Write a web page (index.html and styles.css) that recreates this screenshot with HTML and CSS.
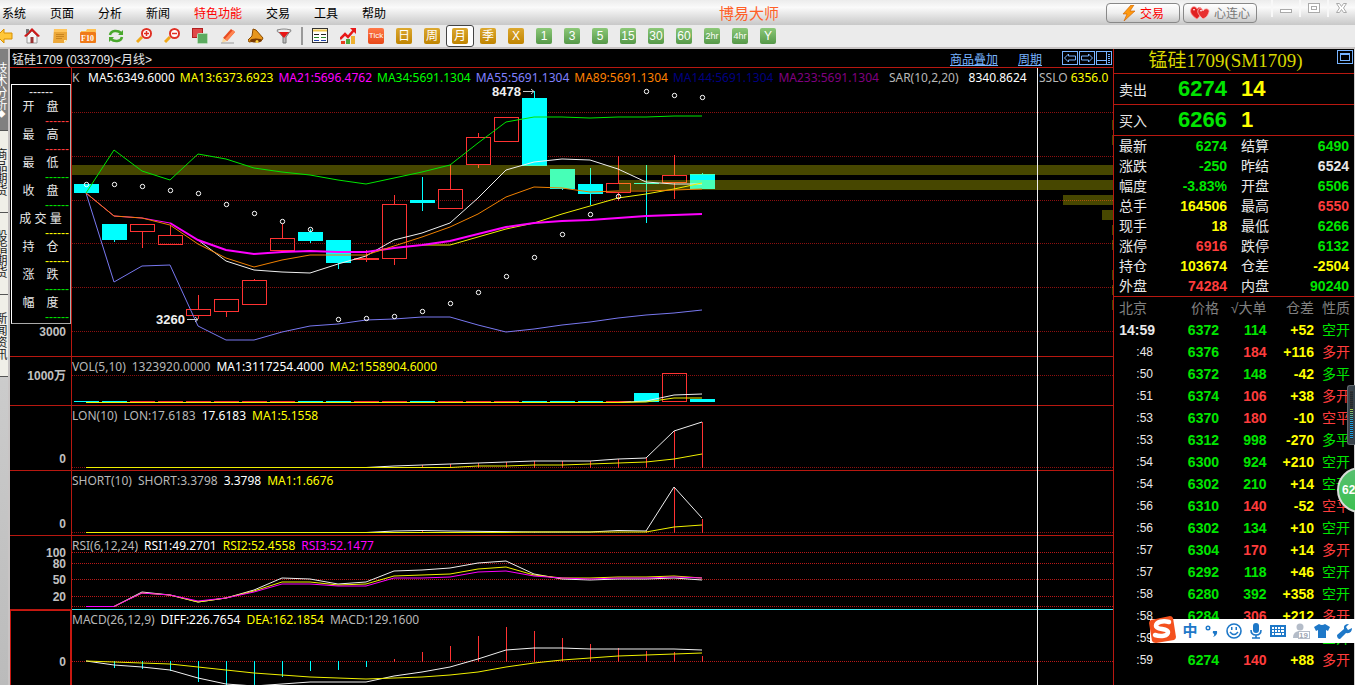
FILE: index.html
```html
<!DOCTYPE html>
<html lang="zh-CN">
  <head>
    <title>博易大师</title>
    <meta charset="utf-8" />
    <meta name="viewport" content="width=device-width" />
    <link rel="stylesheet" href="styles.css">
  </head>
  <body>

    <header class="menubar">
        <nav class="menu">
            <a href="#">系统</a>
            <a href="#">页面</a>
            <a href="#">分析</a>
            <a href="#">新闻</a>
            <a href="#" class="hot">特色功能</a>
            <a href="#">交易</a>
            <a href="#">工具</a>
            <a href="#">帮助</a>
        </nav>
        <h1 class="app-title">博易大师</h1>
        <button class="pill trade">
            <svg width="14" height="16" viewBox="0 0 14 16"><path d="M9 0L1 9h4L2 16 13 6H8l4-6z" fill="#ff9a10" stroke="#c85a00" stroke-width=".6"/></svg>
            交易
        </button>
        <button class="pill heart">
            <svg width="20" height="14" viewBox="0 0 20 14"><path d="M7 13C1 9 0 6 1 3s5-3 6 0c2-3 6-1 5 2s-2 5-5 8z" fill="#e02020" stroke="#f88" stroke-width=".8"/><path d="M13 13c-4-4-6-6-5-9s4-2 5 1c2-4 7-2 6 1s-2 5-6 7z" fill="#e83030" stroke="#fbb" stroke-width=".8"/><path d="M3 4q1-1 2 0M10 5q1-1 2 0" stroke="#fff" fill="none"/></svg>
            心连心
        </button>
        <div class="window-buttons">
            <button aria-label="最小化"><svg width="14" height="14"><rect x="1.500" y="7.500" width="11" height="3" fill="#fff" stroke="#aaa"/></svg></button>
            <button aria-label="还原"><svg width="14" height="14"><rect x="1.500" y="1.500" width="11" height="9" fill="#fff" stroke="#aaa"/><rect x="4.500" y="4.500" width="5" height="3" fill="#fff" stroke="#aaa"/></svg></button>
            <button aria-label="关闭"><svg width="14" height="14"><path d="M1.500 1.500h3l2 3 2-3h3l-3 4.500 3 4.500h-3l-2-3-2 3h-3l3-4.500z" fill="#fff" stroke="#aaa"/></svg></button>
        </div>
    </header>

    <div class="toolbar">
        <button class="back" aria-label="后退"><svg width="13" height="16" viewBox="0 0 13 16"><path d="M-3 8l7-7v4h8v6H4v4z" fill="#ffc73a" stroke="#d89000"/></svg></button>
        <button aria-label="主页"><svg width="16" height="16"><path d="M3 8v7h10V8L8 3z" fill="#f4f4f4" stroke="#999"/><path d="M0 8L8 0l8 8-2 1-6-6-6 6z" fill="#d01818"/><path d="M2 1h3v3L2 6z" fill="#777"/><path d="M6.500 9h3v6h-3z" fill="#933"/></svg></button>
        <button aria-label="记事"><svg width="16" height="16"><path d="M2 1h13v11l-3 3H1z" fill="#eca83a"/><path d="M2 1h13v3H2z" fill="#ffc55c"/><path d="M4 6.500h8M4 8.500h8M4 10.500h6" stroke="#c88420"/><path d="M15 12l-3 3v-3z" fill="#fff0c0"/></svg></button>
        <button aria-label="F10"><svg width="17" height="16"><path d="M1 3h5l1-2h9v3H1z" fill="#ffc050"/><rect y="4" width="16" height="11" rx="1" fill="#f07a18"/><text x="1" y="13" class="f10">F10</text></svg></button>
        <button aria-label="刷新"><svg width="16" height="16"><path d="M2 7c1-5 8-5 11-2M14 9c-1 5-8 5-11 2" fill="none" stroke="#49a82c" stroke-width="2.500"/><path d="M15 2v5h-5zM1 14V9h5z" fill="#49a82c"/></svg></button>
        <button aria-label="放大"><svg width="16" height="16"><path d="M6 9l-5 5" stroke="#f0a818" stroke-width="3"/><circle cx="10.500" cy="5.500" r="4.500" fill="#fff" stroke="#e03024" stroke-width="2"/><path d="M8 5.500h5M10.500 3v5" stroke="#e03024" stroke-width="1.500"/></svg></button>
        <button aria-label="缩小"><svg width="16" height="16"><path d="M6 9l-5 5" stroke="#f0a818" stroke-width="3"/><circle cx="10.500" cy="5.500" r="4.500" fill="#fff" stroke="#e03024" stroke-width="2"/><path d="M8 5.500h5" stroke="#e03024" stroke-width="1.500"/></svg></button>
        <button aria-label="叠加"><svg width="16" height="16"><rect x=".5" y=".5" width="10" height="9" fill="#e04a4a" stroke="#b02020"/><rect x="5.500" y="5.500" width="10" height="10" rx="1" fill="#5cab60" stroke="#b8dcb8"/></svg></button>
        <button aria-label="画线"><svg width="16" height="16"><path d="M3 10L11 1l4 3-8 9z" fill="#e84a20"/><path d="M5 11l8-9 2 2-8 9z" fill="#ff8450"/><path d="M3 10l4 3-5 2z" fill="#f8d8a0"/><path d="M1 15h13" stroke="#999"/></svg></button>
        <button aria-label="预警"><svg width="16" height="16"><path d="M5 1l3 1 7 8-1 2L1 14l-1-2 4-4z" fill="#e8961c" stroke="#8a4a00"/><ellipse cx="8" cy="12.500" rx="6" ry="2" fill="#7a3a00"/><circle cx="9" cy="13.500" r="1.500" fill="#ffd040"/></svg></button>
        <button aria-label="筛选"><svg width="16" height="16"><path d="M1 2h14L10 9v6H7V9z" fill="#bbb" stroke="#777"/><ellipse cx="8" cy="3" rx="7" ry="2" fill="#eee" stroke="#888"/><path d="M3 4h10l-5 6z" fill="#e81818"/></svg></button>
        <span class="separator"></span>
        <button aria-label="报价"><svg width="16" height="16"><rect x=".5" y=".5" width="15" height="14" fill="#fff" stroke="#333"/><path d="M1 2.500h14" stroke="#f0c850" stroke-width="2"/><path d="M2 6.500h5M9 6.500h5" stroke="#222"/><path d="M2 9.500h5M9 9.500h5" stroke="#2a8a2a"/><path d="M2 12.500h5M9 12.500h5" stroke="#24a"/></svg></button>
        <button aria-label="走势"><svg width="16" height="16"><path d="M0 11l5-5 3 3 6-7" fill="none" stroke="#e81818" stroke-width="2.500"/><path d="M10 0h6v6z" fill="#e81818"/><path d="M1 13h4v3H1z" fill="#e84020"/><path d="M6 11h4v5H6z" fill="#4caa3c"/><path d="M11 8h4v8h-4z" fill="#eeb030"/></svg></button>
        <button><span class="period tick">Tick</span></button>
        <button><span class="period gold">日</span></button>
        <button><span class="period gold">周</span></button>
        <button class="active"><span class="period gold">月</span></button>
        <button><span class="period gold">季</span></button>
        <button><span class="period gold">X</span></button>
        <button><span class="period">1</span></button>
        <button><span class="period">3</span></button>
        <button><span class="period">5</span></button>
        <button><span class="period">15</span></button>
        <button><span class="period">30</span></button>
        <button><span class="period">60</span></button>
        <button><span class="period narrow">2hr</span></button>
        <button><span class="period narrow">4hr</span></button>
        <button><span class="period">Y</span></button>
    </div>

    <main class="workspace">

        <nav class="side-tabs">
            <a href="#" class="current">技术分析<span>◆</span></a>
            <a href="#">商品期货</a>
            <a href="#">股指期货</a>
            <a href="#">新闻资讯</a>
        </nav>

        <section class="charts">
            <div class="chart-title">
                <h2>锰硅1709 (033709)&lt;月线&gt;</h2>
                <a href="#">商品叠加</a>
                <a href="#">周期</a>
                <div class="chart-buttons">
                    <button aria-label="向左"><svg width="16" height="14"><rect x=".5" y=".5" width="15" height="13"/><path d="M2.500 7l4-4v2h7v4h-7v2z"/></svg></button>
                    <button aria-label="向右"><svg width="16" height="14"><rect x=".5" y=".5" width="15" height="13"/><path d="M13.500 7l-4-4v2h-7v4h7v2z"/></svg></button>
                    <button aria-label="布局"><svg width="16" height="14"><rect x=".5" y=".5" width="15" height="13"/><path d="M10.500 1v12M1 9.500h9M12 3.500h2M12 5.500h2M12 7.500h2M12 9.500h2M12 11.500h2"/></svg></button>
                </div>
            </div>

            <div class="panes">
                <div class="pane">
                    <div class="axis">
                        <div class="info">
                            <p class="when">------</p>
                            <dl>
                                <dt>开&emsp;盘</dt><dd class="up">------</dd>
                                <dt>最&emsp;高</dt><dd class="up">------</dd>
                                <dt>最&emsp;低</dt><dd class="down">------</dd>
                                <dt>收&emsp;盘</dt><dd class="down">------</dd>
                                <dt>成 交 量</dt><dd class="flat">------</dd>
                                <dt>持&emsp;仓</dt><dd class="flat">------</dd>
                                <dt>涨&emsp;跌</dt><dd class="down">------</dd>
                                <dt>幅&emsp;度</dt><dd class="down">------</dd>
                            </dl>
                        </div>
                        <span class="axis-label">3000</span>
                    </div>
                    <div class="plot">
                        <svg width="100%" height="288">
                            <defs>
                                <marker id="dot" markerWidth="7" markerHeight="7" refX="3" refY="3" markerUnits="userSpaceOnUse"><circle cx="3.500" cy="3.500" r="2.200" class="sar"/></marker>
                            </defs>
                            <g class="grid">
                                <line x2="100%" y1="44.500" y2="44.500"/><line x2="100%" y1="88.500" y2="88.500"/>
                                <line x2="100%" y1="132.500" y2="132.500"/><line x2="100%" y1="175.500" y2="175.500"/>
                                <line x2="100%" y1="219.500" y2="219.500"/><line x2="100%" y1="263.500" y2="263.500"/>
                            </g>
                            <!-- candles -->
                            <path class="rise" d="M58.500 156.500h24v7h-24zM70.500 163v17M86.500 167.500h24v9h-24zM98.500 157v10M114.500 241.500h24v6h-24zM126.500 227v14M126.500 248v3M142.500 231.500h24v12h-24zM154.500 244v5M170.500 212.500h24v24h-24zM182.500 211v1M198.500 170.500h24v12h-24zM210.500 156v14M282.500 190.500h24v1h-24zM294.500 182v12M310.500 136.500h24v54h-24zM322.500 127v9M322.500 191v6M366.500 121.500h24v19h-24zM378.500 97v24M394.500 69.500h24v27h-24zM406.500 65v4M406.500 97v3M422.500 49.500h24v24h-24zM534.500 115.500h24v9h-24zM546.500 88v27M546.500 125v8M590.500 107.500h24v7h-24zM602.500 87v20M602.500 115v16"/>
                            <path class="fall" d="M2 116h25v9H2zM30 156h25v16H30zM42 172h1v2h-1zM226 164h25v9h-25zM238 161h1v14h-1zM254 172h25v23h-25zM266 195h1v6h-1zM338 132h25v3h-25zM350 109h1v34h-1zM450 30h25v68h-25zM462 23h1v7h-1zM478 101h25v20h-25zM490 121h1v1h-1zM506 116h25v10h-25zM518 100h1v37h-1zM574 97h1v58h-1zM562 115h25v1h-25zM618 106h25v15h-25zM630 105h1v1h-1z"/>
                            <!-- price volume bands -->
                            <g class="band">
                                <rect y="97" width="100%" height="10"/>
                                <rect x="547" y="112" width="100%" height="10"/>
                                <rect x="478" y="101" width="25" height="19"/>
                            </g>
                            <svg x="100%" overflow="visible" class="band">
                                <path d="M-50 127h50v10h-50zM-11 142h11v10h-11zM-1 52h1v10h-1zM-1 67h1v10h-1zM-1 157h1v10h-1zM-1 172h1v10h-1zM-1 202h1v10h-1zM-1 217h1v10h-1zM-1 232h1v10h-1z"/>
                            </svg>
                            <polyline class="blue" points="14,125 42,214 70,198 98,197 126,258 154,272 182,272 210,264 238,258 266,256 294,252 322,251 350,249 378,249 406,257 434,264 462,261 490,257 518,254 546,250 574,247 602,245 630,242"/>
                            <polyline class="green" points="14,125 42,82 70,103 98,112 126,86 154,91 182,100 210,104 238,107 266,112 294,116 322,110 350,104 378,97 406,75 434,54 462,49 490,49 518,50 546,49 574,49 602,48 630,48"/>
                            <polyline class="white" points="126,172 154,193 182,202 210,204 238,205 266,196 294,188 322,172 350,165 378,155 406,130 434,102 462,94 490,91 518,92 546,101 574,114 602,116 630,116"/>
                            <polyline class="yellow" points="350,177 378,177 406,169 434,161 462,155 490,146 518,138 546,130 574,126 602,121 630,115"/>
                            <polyline class="magenta" points="14,125 42,148 70,150 98,155"/>
                            <polyline class="magenta thick" points="98,155 126,172 154,182 182,186 210,184 238,183 266,184 294,184 322,180 350,177 378,173 406,166 434,159 462,155 490,153 518,152 546,150 574,148 602,147 630,146"/>
                            <polyline class="orange" points="14,125 42,148 70,150 98,157 126,176 154,190 182,199 210,192 238,187 266,187 294,187 322,178 350,169 378,159 406,146 434,129 462,119 490,120 518,124 546,123 574,123 602,122 630,121"/>
                            <polyline class="dots" points="14,116 42,116 70,118 98,122 126,125 154,136 182,145 210,153 238,161 266,251 294,250 322,248 350,243 378,235 406,224 434,208 462,189 490,166 518,146 546,128 574,23 602,27 630,29"/>
                            <path class="arrow" d="M451 23.500h11M459 21l3 2.500-3 2.500M115 251.500h11M123 249l3 2.500-3 2.500"/>
                            <text class="mark" x="420" y="28">8478</text>
                            <text class="mark" x="84" y="256">3260</text>
                        </svg>
                        <div class="legend main-legend">
                            <span class="k">K</span>
                            <span class="c-white">MA5:6349.6000</span>
                            <span class="c-yellow">MA13:6373.6923</span>
                            <span class="c-magenta">MA21:5696.4762</span>
                            <span class="c-green">MA34:5691.1304</span>
                            <span class="c-blue">MA55:5691.1304</span>
                            <span class="c-orange">MA89:5691.1304</span>
                            <span class="c-navy">MA144:5691.1304</span>
                            <span class="c-purple">MA233:5691.1304</span>
                            <span class="sar-name">SAR(10,2,20)</span>
                            <span class="c-white">8340.8624</span>
                            <span class="sslo">SSLO <b>6356.0</b></span>
                        </div>
                    </div>
                </div>

                <div class="pane">
                    <svg class="axis" height="48"><text x="56" y="23">1000万</text></svg>
                    <div class="plot">
                        <svg width="100%" height="48">
                            <g class="grid"><line x2="100%" y1="18.500" y2="18.500"/></g>
                            <path class="rise" d="M58 44.500h25M86 44.500h25M114 44.500h25M142 44.500h25M170 44.500h25M198 44.500h25M282 44.500h25M310 44.500h25M366 44.500h25M394 44.500h25M422 44.500h25M534 44.500h25M590.500 16.500h24v28h-24z"/>
                            <path class="fall" d="M2 44h25v1H2zM30 44h25v1H30zM226 44h25v1h-25zM254 44h25v1h-25zM338 44h25v1h-25zM450 44h25v1h-25zM478 44h25v1h-25zM506 44h25v1h-25zM562 36h25v9h-25zM618 42h25v3h-25z"/>
                            <polyline class="white" points="14,45.500 546,45.500 574,44 602,38 630,37"/>
                            <polyline class="yellow" points="14,45.500 546,45.500 574,45 602,41 630,41"/>
                        </svg>
                        <div class="legend"><span>VOL(5,10)</span><span>1323920.0000</span><span class="c-white">MA1:3117254.4000</span><span class="c-yellow">MA2:1558904.6000</span></div>
                    </div>
                </div>

                <div class="pane">
                    <svg class="axis" height="64"><text x="56" y="57">0</text></svg>
                    <div class="plot">
                        <svg width="100%" height="64">
                            <g class="grid"><line x2="100%" y1="61.500" y2="61.500"/></g>
                            <path class="rise" d="M350.500 62v-3M378.500 62v-4M406.500 62v-5M434.500 62v-6M462.500 62v-7M490.500 62v-7M518.500 62v-7M546.500 62v-9M574.500 62v-10M602.500 62v-37M630.500 62v-46"/>
                            <polyline class="white" points="14,61.500 294,61.500 322,60 350,59 378,58 406,57 434,56 462,55 490,55 518,55 546,53 574,52 602,25 630,16"/>
                            <polyline class="yellow" points="14,61.500 378,61.500 406,60 434,60 462,59 490,59 518,58 546,57 574,56 602,53 630,48"/>
                        </svg>
                        <div class="legend"><span>LON(10)</span><span>LON:17.6183</span><span class="c-white">17.6183</span><span class="c-yellow">MA1:5.1558</span></div>
                    </div>
                </div>

                <div class="pane">
                    <svg class="axis" height="64"><text x="56" y="57">0</text></svg>
                    <div class="plot">
                        <svg width="100%" height="64">
                            <g class="grid"><line x2="100%" y1="61.500" y2="61.500"/></g>
                            <path class="rise" d="M350.500 62v-2M462.500 62v-1M574.500 62v-2M602.500 62v-45M630.500 62v-14"/>
                            <polyline class="white" points="14,61.500 294,61.500 322,60 350,59.500 378,60 462,61 518,61 546,59.500 574,60 602,16 630,47"/>
                            <polyline class="yellow" points="14,61.500 434,61.500 462,61 574,61 602,56 630,54"/>
                        </svg>
                        <div class="legend"><span>SHORT(10)</span><span>SHORT:3.3798</span><span class="c-white">3.3798</span><span class="c-yellow">MA1:1.6676</span></div>
                    </div>
                </div>

                <div class="pane selected-next">
                    <svg class="axis" height="73"><text x="56" y="21">100</text><text x="56" y="32">80</text><text x="56" y="48">50</text><text x="56" y="65">20</text></svg>
                    <div class="plot">
                        <svg width="100%" height="73">
                            <g class="grid bright">
                                <line x2="100%" y1="16.500" y2="16.500"/><line x2="100%" y1="27.500" y2="27.500"/>
                                <line x2="100%" y1="43.500" y2="43.500"/><line x2="100%" y1="60.500" y2="60.500"/>
                                <line x2="100%" y1="70.500" y2="70.500"/>
                            </g>
                            <polyline class="white" points="14,70.500 42,70.500 70,56 98,59 126,66 154,62 182,54 210,42 238,43 266,48 294,46 322,35 350,34 378,32 406,27 434,25 462,38 490,43 518,44 546,43 574,43 602,42 630,44"/>
                            <polyline class="yellow" points="14,70.500 42,70.500 70,57 98,59 126,66 154,62 182,55 210,46 238,46 266,49 294,48 322,40 350,39 378,38 406,33 434,31 462,39 490,42 518,42 546,41 574,41 602,40 630,42"/>
                            <polyline class="magenta" points="14,70.500 42,70.500 70,57 98,59 126,65 154,62 182,56 210,48 238,48 266,50 294,50 322,42 350,42 378,41 406,36 434,35 462,40 490,42 518,43 546,42 574,42 602,41 630,42"/>
                        </svg>
                        <div class="legend"><span>RSI(6,12,24)</span><span class="c-white">RSI1:49.2701</span><span class="c-yellow">RSI2:52.4558</span><span class="c-magenta">RSI3:52.1477</span></div>
                    </div>
                </div>

                <div class="pane selected">
                    <svg class="axis" height="76"><text x="55" y="55">0</text></svg>
                    <div class="plot">
                        <svg width="100%" height="76">
                            <g class="grid bright"><line x2="100%" y1="51.500" y2="51.500"/></g>
                            <path class="fall" d="M42 51h1v7h-1zM70 51h1v8h-1zM98 51h1v10h-1zM126 51h1v21h-1zM154 51h1v25h-1zM182 51h1v25h-1zM210 51h1v16h-1zM238 51h1v10h-1zM266 51h1v9h-1zM294 51h1v6h-1z"/>
                            <path class="rise" d="M322.500 52v-3M350.500 52V42M378.500 52V36M406.500 52V26M434.500 52V17M462.500 52V21M490.500 52V28M518.500 52V34M546.500 52V38M574.500 52V41M602.500 52V42M630.500 52V46"/>
                            <polyline class="white" points="14,51 42,55 70,57 98,60 126,68 154,74 182,76 210,74 238,72 266,72 294,72 322,66 350,62 378,57 406,49 434,40 462,38 490,38 518,39 602,39 630,40"/>
                            <polyline class="yellow" points="14,51 42,52 70,53 98,54 126,57 154,60 182,63 210,65 238,67 266,68 294,69 322,68 350,67 378,65 406,62 434,57 462,53 490,50 518,48 546,46 574,45 602,44 630,43"/>
                        </svg>
                        <div class="legend"><span>MACD(26,12,9)</span><span class="c-white">DIFF:226.7654</span><span class="c-yellow">DEA:162.1854</span><span>MACD:129.1600</span></div>
                    </div>
                </div>
                <div class="cursor-line"></div>
            </div>
        </section>

        <aside class="quote">
            <div class="quote-title">
                <h2>锰硅1709(SM1709)</h2>
                <button aria-label="放大窗口"><svg width="16" height="14"><rect x=".5" y=".5" width="15" height="13"/><rect x="3.500" y="3.500" width="9" height="7"/><path d="M3 4.500h10"/></svg></button>
            </div>
            <div class="bid"><span>卖出</span><b class="down">6274</b><b class="flat">14</b></div>
            <div class="bid"><span>买入</span><b class="down">6266</b><b class="flat">1</b></div>

            <table class="stats">
                <tr><th>最新</th><td class="down">6274</td><th>结算</th><td class="down">6490</td></tr>
                <tr><th>涨跌</th><td class="down">-250</td><th>昨结</th><td>6524</td></tr>
                <tr><th>幅度</th><td class="down">-3.83%</td><th>开盘</th><td class="down">6506</td></tr>
                <tr><th>总手</th><td class="flat">164506</td><th>最高</th><td class="up">6550</td></tr>
                <tr><th>现手</th><td class="flat">18</td><th>最低</th><td class="down">6266</td></tr>
                <tr><th>涨停</th><td class="up">6916</td><th>跌停</th><td class="down">6132</td></tr>
                <tr><th>持仓</th><td class="flat">103674</td><th>仓差</th><td class="flat">-2504</td></tr>
                <tr><th>外盘</th><td class="up">74284</td><th>内盘</th><td class="down">90240</td></tr>
            </table>

            <table class="ticks">
                <thead><tr><th>北京</th><th>价格</th><th>√大单</th><th>仓差</th><th>性质</th></tr></thead>
                <tbody>
                    <tr class="down first"><td>14:59</td><td>6372</td><td>114</td><td>+52</td><td>空开</td></tr>
                    <tr class="up"><td>:48</td><td>6376</td><td>184</td><td>+116</td><td>多开</td></tr>
                    <tr class="down"><td>:50</td><td>6372</td><td>148</td><td>-42</td><td>多平</td></tr>
                    <tr class="up"><td>:51</td><td>6374</td><td>106</td><td>+38</td><td>多开</td></tr>
                    <tr class="up"><td>:53</td><td>6370</td><td>180</td><td>-10</td><td>空平</td></tr>
                    <tr class="down"><td>:53</td><td>6312</td><td>998</td><td>-270</td><td>多平</td></tr>
                    <tr class="down"><td>:54</td><td>6300</td><td>924</td><td>+210</td><td>空开</td></tr>
                    <tr class="down"><td>:54</td><td>6302</td><td>210</td><td>+14</td><td>空开</td></tr>
                    <tr class="up"><td>:56</td><td>6310</td><td>140</td><td>-52</td><td>空平</td></tr>
                    <tr class="down"><td>:56</td><td>6302</td><td>134</td><td>+10</td><td>空开</td></tr>
                    <tr class="up"><td>:57</td><td>6304</td><td>170</td><td>+14</td><td>多开</td></tr>
                    <tr class="down"><td>:57</td><td>6292</td><td>118</td><td>+46</td><td>空开</td></tr>
                    <tr class="down"><td>:58</td><td>6280</td><td>392</td><td>+358</td><td>空开</td></tr>
                    <tr class="up"><td>:58</td><td>6284</td><td>306</td><td>+212</td><td>多开</td></tr>
                    <tr class="down"><td>:59</td><td></td><td></td><td></td><td>空开</td></tr>
                    <tr class="up"><td>:59</td><td>6274</td><td>140</td><td>+88</td><td>多开</td></tr>
                </tbody>
            </table>
        </aside>
    </main>

    <div class="gauge"><span></span></div>
    <div class="speed-ball">62</div>

    <div class="ime">
        <svg class="ime-logo" width="28" height="28" viewBox="0 0 28 28"><path d="M3 5L22 1q2 0 3 2l3 19q0 2-2 3L8 28q-3 0-4-2L1 8q0-2 2-3z" fill="#f4511e"/><path d="M21 7C15 5 8 7 8 11s12 2 12 6-7 5-13 3" fill="none" stroke="#fff" stroke-width="4.500" stroke-linecap="round"/></svg>
        <button class="zh">中</button>
        <button aria-label="标点"><svg width="16" height="16"><circle cx="4" cy="5" r="1.800" fill="none" stroke="#1e78c8" stroke-width="1.400"/><path d="M9 8h4q1 4-4 6 2-2 1-3-2-1-1-3z"/></svg></button>
        <button aria-label="表情"><svg width="16" height="16"><circle cx="8" cy="8" r="7" fill="none" stroke="#1e78c8" stroke-width="1.600"/><path d="M5 4h1.500v3H5zM9.500 4H11v3H9.500z"/><path d="M4 9q4 5 8 0" fill="none" stroke="#1e78c8" stroke-width="1.500"/></svg></button>
        <button aria-label="语音"><svg width="16" height="16"><rect x="5" width="6" height="10" rx="3"/><path d="M3 7q0 5 5 5t5-5M8 12v3M4 15h8" fill="none" stroke="#1e78c8" stroke-width="1.600"/></svg></button>
        <button aria-label="键盘"><svg width="16" height="16"><path fill-rule="evenodd" d="M0 2h16v12H0zM2 4v2h2V4zM5 4v2h2V4zM8 4v2h2V4zM11 4v2h3V4zM2 7v2h2V7zM5 7v2h2V7zM8 7v2h2V7zM11 7v2h3V7zM2 10v2h2v-2zM5 10v2h6v-2zM12 10v2h2v-2z"/></svg></button>
        <button aria-label="账号"><svg width="16" height="16" overflow="visible"><g fill="#b4bcc8"><circle cx="8" cy="4" r="3.500"/><path d="M1 15q0-7 7-7 4 0 5 2v5z"/></g><rect x="6.500" y="8.500" width="11" height="7" fill="#fff" stroke="#b4bcc8"/><text x="7" y="15" class="badge">19</text></svg></button>
        <button aria-label="皮肤"><svg width="16" height="16"><path d="M5 1q3 2 6 0l5 3-2 4-2-1v8H4V7L2 8 0 4z"/></svg></button>
        <button aria-label="工具"><svg width="16" height="16"><path d="M1 12l7-6q-1-5 5-5l-3 3 2 3 4-2q0 6-6 5l-6 6q-3 0-3-4z"/></svg></button>
    </div>

  </body>
</html>
```
FILE: styles.css
```css
body {
    display: flex;
    flex-direction: column;
    height: 100vh;
    margin: 0;
    overflow: hidden;
    background: #000;
    color: #e8e8e8;
    font-family: "Liberation Sans", "Noto Sans CJK SC", sans-serif;
    font-size: 12px;
}
h1, h2, p, dl, dd {
    margin: 0;
    font-weight: normal;
}
a {
    color: inherit;
    text-decoration: none;
}
button {
    display: flex;
    align-items: center;
    justify-content: center;
    box-sizing: border-box;
    padding: 0;
    border: 0;
    background: none;
    color: inherit;
    font: inherit;
}
svg {
    display: block;
}

/* colours for rising, falling and unchanged values */
.up { color: #ff3c3c; }
.down { color: #00e600; }
.flat { color: #ff0; }

/* top bars */
.menubar {
    display: flex;
    align-items: center;
    flex: none;
    height: 25px;
    background: linear-gradient(#ececec, #fafafa 30%, #c8c8c8);
    color: #000;
}
.menu {
    display: flex;
    gap: 24px;
    padding-left: 2px;
}
.menu .hot {
    color: #f00;
}
.app-title {
    margin: 0 auto;
    padding-left: 6px;
    color: #ff6028;
    font-size: 15px;
}
.pill {
    gap: 4px;
    width: 74px;
    height: 20px;
    margin-right: 3px;
    border: 1px solid #888;
    border-radius: 4px;
    background: linear-gradient(#fff, #eee 50%, #c8c8c8);
}
.trade {
    color: #f00;
}
.heart {
    color: #777;
}
.window-buttons {
    display: flex;
    align-self: flex-start;
    width: 84px;
    margin-left: 11px;
}
.window-buttons button {
    flex: 1;
    height: 17px;
    border-left: 2px solid #f8f8f8;
}
.toolbar {
    display: flex;
    align-items: center;
    flex: none;
    height: 22px;
    border-bottom: 2px solid #c8c4c4;
    background: #ebebeb;
}
.toolbar button {
    width: 28px;
    height: 22px;
}
.toolbar .back {
    width: 18px;
    padding-right: 5px;
}
.toolbar .active {
    border: 1px solid #444;
    border-radius: 3px;
    background: #fff;
}
.separator {
    width: 2px;
    height: 18px;
    margin: 0 3px;
    background: #999;
}
.period {
    width: 16px;
    height: 16px;
    border-radius: 2px;
    background: linear-gradient(#8cc878, #559848);
    color: #fff;
    font-size: 12px;
    line-height: 16px;
    text-align: center;
}
.period.gold {
    background: linear-gradient(#dca830, #c08400);
}
.period.tick {
    background: linear-gradient(#ff7848, #e84818);
    font-size: 8px;
}
.period.narrow {
    font-size: 9px;
}
.f10 {
    fill: #fff;
    font: bold 8px "Liberation Serif", serif;
}

/* workspace */
.workspace {
    display: flex;
    flex: 1;
    min-height: 0;
}
.side-tabs {
    display: flex;
    flex: none;
    flex-direction: column;
    align-items: flex-end;
    width: 8px;
    overflow: hidden;
    border-right: 2px solid #c8c4c4;
    background: linear-gradient(#ddd, #bbb);
}
.side-tabs a {
    display: flex;
    align-items: center;
    justify-content: center;
    width: 16px;
    height: 81px;
    border-bottom: 1px solid #555;
    background: #f0efe8;
    color: #222;
    line-height: 16px;
    writing-mode: vertical-rl;
}
.side-tabs .current {
    background: #808080;
    color: #fff;
}
.side-tabs span {
    font-size: 8px;
}

.charts {
    display: flex;
    flex: 1;
    flex-direction: column;
    min-width: 0;
}
.chart-title {
    display: flex;
    align-items: center;
    gap: 20px;
    height: 18px;
    border-bottom: 1px solid #b81810;
}
.chart-title h2 {
    margin-right: auto;
    padding-left: 2px;
    font-size: 12px;
}
.chart-title a {
    color: #78b4ff;
    text-decoration: underline;
}
.chart-buttons {
    display: flex;
    gap: 1px;
    padding-right: 1px;
}
.chart-buttons svg, .quote-title svg {
    fill: none;
    stroke: #78b4ff;
}

.panes {
    position: relative;
    flex: 1;
    min-height: 0;
    overflow: hidden;
}
.cursor-line {
    position: absolute;
    top: 0;
    right: 75px;
    bottom: 0;
    width: 1px;
    background: #f0f0f0;
}
.pane {
    display: flex;
    border-bottom: 1px solid #b81810;
}
.axis {
    flex: none;
    width: 61px;
    border-right: 1px solid #b81810;
    font-weight: bold;
    font-size: 12px;
}
.axis text {
    fill: #c0c0c0;
    text-anchor: end;
}
.axis-label {
    display: block;
    padding-right: 5px;
    color: #c0c0c0;
    line-height: 16px;
    text-align: right;
}
.plot {
    display: grid;
    flex: 1;
    min-width: 0;
}
.plot > svg, .legend {
    grid-area: 1 / 1;
}
.legend {
    display: flex;
    gap: 6px;
    align-self: start;
    min-width: 0;
    overflow: hidden;
    color: #b8b8b8;
    font-family: "Noto Sans", sans-serif;
    line-height: 19px;
    white-space: nowrap;
}
.main-legend {
    gap: 5px;
}
.k {
    width: 11px;
}
.sar-name {
    padding: 0 5px;
}
.sslo {
    width: 74px;
    margin-left: auto;
}
.sslo b {
    color: #ff0;
    font-weight: normal;
}
.selected-next .plot {
    margin-bottom: -1px;
    border-bottom: 1px solid #40e8f0;
}
.selected .axis {
    box-sizing: border-box;
    width: 62px;
    border: 1px solid #c81810;
    border-right-width: 2px;
    border-bottom: 0;
}

.info {
    margin: 16px 0 0 1px;
    height: 238px;
    border: 1px solid #fff;
    border-right-color: #aaa;
    border-bottom-color: #aaa;
    font-weight: normal;
    font-size: 12px;
    line-height: 14px;
    text-align: center;
}
.info dl {
    padding: 1px 1px 0 0;
}
.info dt {
    white-space: nowrap;
}
.info dd {
    text-align: right;
}

/* series */
.grid line {
    stroke: #8c1010;
    stroke-dasharray: 1 1;
    shape-rendering: crispEdges;
}
.grid.bright line {
    stroke: #b81818;
}
.rise {
    fill: none;
    stroke: #ff3232;
    shape-rendering: crispEdges;
}
.fall {
    fill: #0ff;
}
.band {
    fill: #ff0;
    opacity: .28;
}
polyline {
    fill: none;
    stroke-width: 1;
}
.thick { stroke-width: 2; }
.white { stroke: #f0f0f0; }
.yellow { stroke: #f0f000; }
.magenta { stroke: #f0f; }
.green { stroke: #00e600; }
.blue { stroke: #7878f0; }
.orange { stroke: #f08000; }
.dots {
    marker: url(#dot);
}
.sar {
    fill: none;
    stroke: #fff;
}
.arrow {
    fill: none;
    stroke: #c8c8c8;
}
.mark {
    fill: #f0f0f0;
    font-weight: bold;
    font-size: 13px;
}
.c-white { color: #fff; }
.c-yellow { color: #ff0; }
.c-magenta { color: #f0f; }
.c-green { color: #0f0; }
.c-blue { color: #8080ff; }
.c-orange { color: #ff8000; }
.c-navy { color: #000080; }
.c-purple { color: #800080; }

/* quote panel */
.quote {
    flex: none;
    width: 240px;
    border-right: 1px solid #d0d0d0;
    border-left: 1px solid #b81810;
}
.quote-title {
    display: flex;
    align-items: center;
    height: 24px;
    padding-right: 1px;
    border-bottom: 1px solid #b81810;
}
.quote-title h2 {
    flex: 1;
    color: #d8d800;
    font: 19px "Liberation Serif", "Noto Sans CJK SC", serif;
    line-height: 24px;
    text-align: center;
}
.quote-title button {
    align-self: flex-start;
    margin-top: 1px;
}
.bid {
    display: grid;
    grid-template-columns: 28px 80px 1fr;
    align-items: center;
    height: 30px;
    padding: 0 5px;
    border-bottom: 1px solid #b81810;
    font-size: 14px;
}
.bid b {
    font-size: 22px;
    text-align: right;
}
.bid b.flat {
    padding-left: 14px;
    text-align: left;
}
.stats, .ticks {
    width: 100%;
    border-spacing: 0;
    table-layout: fixed;
    font-size: 14px;
    font-weight: bold;
}
.stats th, .ticks th {
    font-weight: normal;
}
.stats {
    padding: 0 5px;
    border-bottom: 1px solid #b81810;
}
.stats th, .stats td {
    height: 20px;
    padding: 0;
    line-height: 20px;
    text-align: right;
}
.stats th {
    width: 28px;
    text-align: left;
}
.stats th + td + th {
    width: 28px;
    padding-left: 14px;
}
.stats td:nth-child(2) {
    width: 80px;
}
.ticks {
    padding: 0 4px 0 5px;
}
.ticks th, .ticks td {
    height: 22px;
    padding: 0;
    line-height: 22px;
    text-align: right;
    white-space: nowrap;
}
.ticks th {
    color: #808080;
}
.ticks th:first-child {
    width: 36px;
    text-align: left;
}
.ticks th:nth-child(2) {
    width: 64px;
}
.ticks td:first-child {
    padding-right: 2px;
    color: #e8e8e8;
    font-weight: normal;
    font-size: 12px;
}
.ticks .first td:first-child {
    padding: 0;
    font-weight: bold;
    font-size: 14px;
}
.ticks td:nth-child(2) {
    color: #00e600;
}
.ticks td:nth-child(4) {
    color: #ff0;
}
.ticks th:last-child {
    width: 36px;
}
.ticks td:last-child {
    font-weight: normal;
}

/* floating desktop gadgets */
.gauge {
    position: absolute;
    top: 385px;
    right: 0;
    box-sizing: border-box;
    width: 8px;
    height: 60px;
    padding: 5px 2px;
    border: 1px solid #60686e;
    border-right: 0;
    border-radius: 3px 0 0 3px;
    background: #38424a;
}
.gauge span {
    display: block;
    height: 100%;
    background: repeating-linear-gradient(transparent 0 1px, #202a30 1px 2px), linear-gradient(#333 35%, #b8d040 36%, #60b090 50%, #20a0e0 65%);
}
.speed-ball {
    position: absolute;
    top: 467px;
    right: -28px;
    box-sizing: border-box;
    width: 46px;
    height: 46px;
    padding-left: 3px;
    border: 2px solid #d8dcd8;
    border-radius: 50%;
    background: linear-gradient(#58c070, #3cc050);
    color: #fff;
    font-weight: bold;
    line-height: 42px;
}
.ime {
    position: absolute;
    top: 619px;
    right: 0;
    display: flex;
    align-items: center;
    height: 24px;
    background: #fff;
    color: #1e78c8;
}
.ime-logo {
    margin: 0 3px 4px -2px;
}
.ime button {
    width: 22px;
    fill: #1e78c8;
}
.ime .zh {
    font-weight: bold;
    font-size: 15px;
    line-height: 20px;
}
.badge {
    fill: #a0a8b4;
    font-weight: bold;
    font-size: 8px;
}
```
